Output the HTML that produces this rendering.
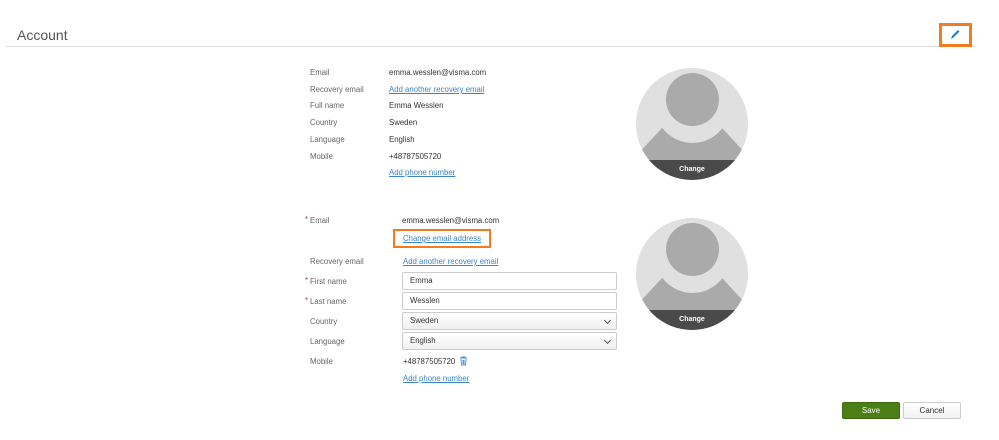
<!DOCTYPE html>
<html><head><meta charset="utf-8"><style>
*{margin:0;padding:0;box-sizing:border-box}
body{width:999px;height:440px;background:#fff;font-family:"Liberation Sans",Arial,sans-serif;position:relative;overflow:hidden;font-size:7.8px;color:#333}
.a{position:absolute;white-space:nowrap;line-height:10px}
.l{color:#666}
.k{color:#3a85c8;text-decoration:underline}
.req{color:#c0392b;position:absolute;left:-5px;top:-1px}
.in{position:absolute;left:402px;width:215px;height:18px;border:1px solid #ccc;border-radius:2px;padding-left:7px;line-height:16px;font-size:7.8px;color:#333}
.sel{background:linear-gradient(#fff,#f0f0f0)}
.sel:after{content:"";position:absolute;right:6px;top:5px;width:4px;height:4px;border-right:1px solid #555;border-bottom:1px solid #555;transform:rotate(45deg)}
.av{position:absolute;left:636px;width:112px;height:112px;border-radius:50%;background:#e0e0e0;overflow:hidden}
.av .h{position:absolute;left:29.5px;top:5px;width:53px;height:53px;border-radius:50%;background:#aaa}
.av .b{position:absolute;left:0;top:0;width:112px;height:112px;background:#aaa;clip-path:polygon(26px 60px,86px 60px,112px 88px,112px 112px,0 112px,0 88px)}
.av .cut{position:absolute;left:18.5px;top:0;width:75px;height:75px;border-radius:50%;background:#e0e0e0}
.av .c{position:absolute;left:0;top:92px;width:112px;height:20px;background:#4a4a4a;color:#fff;font-weight:bold;font-size:7px;text-align:center;line-height:19px}
</style></head><body>
<div class="a" style="left:17px;top:27px;font-size:14px;line-height:17px;color:#555">Account</div>
<div style="position:absolute;left:6px;top:46px;width:968px;height:1px;background:#ddd"></div>
<div style="position:absolute;left:939px;top:23px;width:33px;height:24px;border:3px solid #f47b20"></div>
<svg style="position:absolute;left:949px;top:28px" width="12" height="13" viewBox="0 0 12 13"><path d="M2 11 L3 8 L9 2 L10.5 3.5 L4.5 9.5 Z" fill="#1a7ed0"/></svg>

<div class="a l" style="left:310px;top:68px">Email</div><div class="a" style="left:389px;top:68px">emma.wesslen@visma.com</div>
<div class="a l" style="left:310px;top:85px">Recovery email</div><div class="a k" style="left:389px;top:85px">Add another recovery email</div>
<div class="a l" style="left:310px;top:101px">Full name</div><div class="a" style="left:389px;top:101px">Emma Wesslen</div>
<div class="a l" style="left:310px;top:118px">Country</div><div class="a" style="left:389px;top:118px">Sweden</div>
<div class="a l" style="left:310px;top:135px">Language</div><div class="a" style="left:389px;top:135px">English</div>
<div class="a l" style="left:310px;top:152px">Mobile</div><div class="a" style="left:389px;top:152px">+48787505720</div>
<div class="a k" style="left:389px;top:168px">Add phone number</div>

<div class="av" style="top:68px"><div class="b"></div><div class="cut"></div><div class="h"></div><div class="c">Change</div></div>

<div class="a l" style="left:310px;top:216px"><span class="req">*</span>Email</div><div class="a" style="left:402px;top:216px">emma.wesslen@visma.com</div>
<div style="position:absolute;left:393px;top:229px;width:98px;height:19px;border:2px solid #f47b20"></div>
<div class="a k" style="left:403px;top:234px">Change email address</div>
<div class="a l" style="left:310px;top:257px">Recovery email</div><div class="a k" style="left:403px;top:257px">Add another recovery email</div>
<div class="a l" style="left:310px;top:277px"><span class="req">*</span>First name</div><div class="in" style="top:272px">Emma</div>
<div class="a l" style="left:310px;top:297px"><span class="req">*</span>Last name</div><div class="in" style="top:292px">Wesslen</div>
<div class="a l" style="left:310px;top:317px">Country</div><div class="in sel" style="top:312px">Sweden</div>
<div class="a l" style="left:310px;top:337px">Language</div><div class="in sel" style="top:332px">English</div>
<div class="a l" style="left:310px;top:357px">Mobile</div><div class="a" style="left:403px;top:357px">+48787505720</div>
<svg style="position:absolute;left:459px;top:356px" width="9" height="10" viewBox="0 0 9 10"><path d="M1 2h7M3 2V1h3v1M2 3l.5 6h4l.5-6M4 4v4M5 4v4" stroke="#3a8fd6" fill="none" stroke-width="0.9"/></svg>
<div class="a k" style="left:403px;top:374px">Add phone number</div>

<div class="av" style="top:218px"><div class="b"></div><div class="cut"></div><div class="h"></div><div class="c">Change</div></div>

<div style="position:absolute;left:842px;top:402px;width:58px;height:17px;background:#4b7e14;border:1px solid #3d6a0e;border-radius:2px;color:#fff;text-align:center;line-height:15px;font-size:8px">Save</div>
<div style="position:absolute;left:903px;top:402px;width:58px;height:17px;background:linear-gradient(#fff,#f2f2f2);border:1px solid #ccc;border-radius:2px;color:#333;text-align:center;line-height:15px;font-size:8px">Cancel</div>
</body></html>
